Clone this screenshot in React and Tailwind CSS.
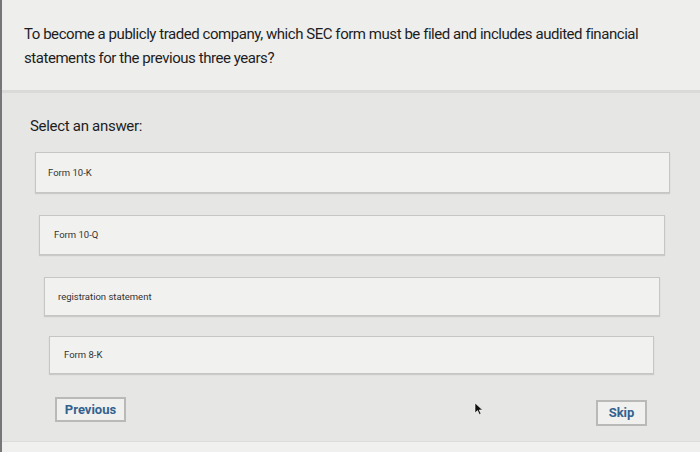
import React from "react";

const options = [
  { label: "Form 10-K", box: "ml-[33px] mr-[30px] h-[41px] mt-[16px]", text: "pl-[12px]" },
  { label: "Form 10-Q", box: "ml-[37px] mr-[35px] h-[40px] mt-[22px]", text: "pl-[14px]" },
  { label: "registration statement", box: "ml-[42px] mr-[40px] h-[39px] mt-[22px]", text: "pl-[13px]" },
  { label: "Form 8-K", box: "ml-[47px] mr-[46px] h-[38px] mt-[20px]", text: "pl-[14px]" },
];

const Cursor = () => (
  <svg width="10" height="14" viewBox="0 0 10 14" className="absolute left-[472px] top-[402px]">
    <path d="M1 1 L1 11 L3.5 8.6 L5.4 12.6 L7 11.8 L5.2 8 L8.6 8 Z" fill="#111" stroke="#fff" strokeWidth="0.6" />
  </svg>
);

export default function App() {
  return (
    <div
      className="relative w-[700px] h-[452px] overflow-hidden flex flex-col bg-[#e6e6e4] border-l-2 border-[#77777a]"
      style={{ fontFamily: "Roboto, 'Liberation Sans', sans-serif" }}
    >
      <div className="h-[90px] shrink-0 bg-[#eeeeec] pl-[22px] pt-[22px]">
        <p className="text-[15px] leading-[24px] text-[#1d1d1f] tracking-[-0.45px] w-[640px]">
          To become a publicly traded company, which SEC form must be filed and includes audited financial statements for the previous three years?
        </p>
      </div>
      <div className="h-[3px] shrink-0 bg-[#dadad8]" />
      <div className="flex-1 flex flex-col">
        <div className="pl-[28px] pt-[23px] text-[15px] leading-[20px] text-[#1d1d1f] tracking-[-0.3px]">
          Select an answer:
        </div>
        {options.map((o) => (
          <div
            key={o.label}
            className={`${o.box} flex items-center bg-[#f1f1ef] border border-[#c6c6c4] shadow-[0_1px_1px_rgba(0,0,0,0.12)]`}
          >
            <span className={`${o.text} text-[9.5px] text-[#333] leading-none`}>{o.label}</span>
          </div>
        ))}
        <div className="flex justify-between items-start mt-[23px] ml-[53px] mr-[53px]">
          <button className="w-[71px] h-[25px] border-2 border-[#b9b9b8] bg-[#f0f0ee] text-[#34628f] text-[13px] font-bold flex items-center justify-center">
            Previous
          </button>
          <button className="mt-[3px] w-[51px] h-[26px] border-2 border-[#b9b9b8] bg-[#f0f0ee] text-[#34628f] text-[13px] font-bold flex items-center justify-center">
            Skip
          </button>
        </div>
      </div>
      <div className="h-[11px] shrink-0 bg-[#f0f0ee] border-t border-[#dcdcda]" />
      <Cursor />
    </div>
  );
}
